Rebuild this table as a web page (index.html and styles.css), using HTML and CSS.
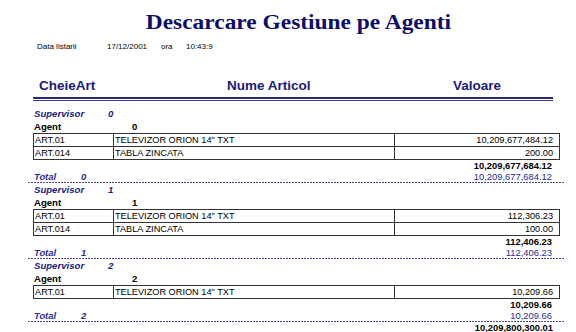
FILE: index.html
```html
<!DOCTYPE html>
<html>
<head>
<meta charset="utf-8">
<link rel="stylesheet" href="styles.css">
</head>
<body>
<div class="page">
  <h1 class="title"><span>Descarcare Gestiune pe Agenti</span></h1>
  <div class="meta"><span class="m-label">Data listarii</span><span class="m-date">17/12/2001</span><span class="m-ora">ora</span><span>10:43:9</span></div>
  <div class="head"><div class="h1">CheieArt</div><div class="h2">Nume Articol</div><div class="h3">Valoare</div></div>
  <div class="rule"></div>

  <section class="group">
    <div class="sup"><span class="k">Supervisor</span><span>0</span></div>
    <div class="agent"><span class="k">Agent</span><span>0</span></div>
    <table class="items">
      <colgroup><col class="c1"><col class="c2"><col class="c3"></colgroup>
      <tr><td>ART.01</td><td>TELEVIZOR ORION 14" TXT</td><td class="v">10,209,677,484.12</td></tr>
      <tr><td>ART.014</td><td>TABLA ZINCATA</td><td class="v">200.00</td></tr>
    </table>
    <div class="subtotal">10,209,677,684.12</div>
    <div class="total"><span class="k">Total</span><span class="n">0</span><span class="v">10,209,677,684.12</span></div>
    <div class="dash"></div>
  </section>

  <section class="group">
    <div class="sup"><span class="k">Supervisor</span><span>1</span></div>
    <div class="agent"><span class="k">Agent</span><span>1</span></div>
    <table class="items">
      <colgroup><col class="c1"><col class="c2"><col class="c3"></colgroup>
      <tr><td>ART.01</td><td>TELEVIZOR ORION 14" TXT</td><td class="v">112,306.23</td></tr>
      <tr><td>ART.014</td><td>TABLA ZINCATA</td><td class="v">100.00</td></tr>
    </table>
    <div class="subtotal">112,406.23</div>
    <div class="total"><span class="k">Total</span><span class="n">1</span><span class="v">112,406.23</span></div>
    <div class="dash"></div>
  </section>

  <section class="group">
    <div class="sup"><span class="k">Supervisor</span><span>2</span></div>
    <div class="agent"><span class="k">Agent</span><span>2</span></div>
    <table class="items">
      <colgroup><col class="c1"><col class="c2"><col class="c3"></colgroup>
      <tr><td>ART.01</td><td>TELEVIZOR ORION 14" TXT</td><td class="v">10,209.66</td></tr>
    </table>
    <div class="subtotal">10,209.66</div>
    <div class="total"><span class="k">Total</span><span class="n">2</span><span class="v">10,209.66</span></div>
    <div class="dash"></div>
  </section>

  <div class="grand">10,209,800,300.01</div>
</div>
</body>
</html>
```

FILE: styles.css
```css
html, body {
  margin: 0;
  background: #fff;
}
body {
  font-family: "Liberation Sans", Arial, sans-serif;
  color: #000;
  overflow: hidden;
}
.page {
  margin-left: 33px;
  width: 526px;
}
.title {
  margin: 10px 0 0;
  padding-left: 4px;
  font: bold 20px/24px "Liberation Serif", "Times New Roman", serif;
  color: #0d0d6b;
  text-align: center;
}
.title span {
  display: inline-block;
  transform: scaleX(1.17);
}
.meta {
  margin-top: 8px;
  display: flex;
  padding-left: 4px;
  font-size: 8px;
  line-height: 10px;
}
.m-label { width: 70px; }
.m-date { width: 54px; }
.m-ora { width: 25px; }
.head {
  margin-top: 26px;
  display: grid;
  grid-template-columns: 80px 281px 165px;
  font-weight: bold;
  font-size: 13.5px;
  line-height: 16px;
  color: #1a1a75;
}
.head .h1 { padding-left: 6px; }
.head .h2 { padding-left: 114px; }
.head .h3 { padding-left: 59px; }
.rule {
  margin-top: 3px;
  margin-bottom: 6px;
  width: 520px;
  height: 1px;
  border-top: 2px solid #2b2b7d;
  border-bottom: 1px solid #3a3a88;
}
.sup {
  display: flex;
  padding-left: 1px;
  font-style: italic;
  font-weight: bold;
  font-size: 9.6px;
  line-height: 13px;
  color: #1a1a80;
}
.sup .k { width: 74px; }
.agent {
  display: flex;
  padding-left: 1px;
  font-weight: bold;
  font-size: 9.6px;
  line-height: 13px;
}
.agent .k { width: 98px; }
.items {
  border-collapse: separate;
  border-spacing: 0;
  table-layout: fixed;
  width: 527px;
  border-top: 1px solid #333;
  border-left: 1px solid #333;
  font-size: 9.2px;
  line-height: 12px;
}
.c1 { width: 80px; }
.c2 { width: 281px; }
.c3 { width: 165px; }
.items td {
  padding: 0 0 0 1px;
  border-right: 1px solid #333;
  border-bottom: 1px solid #333;
  white-space: nowrap;
  overflow: hidden;
}
.items td.v {
  text-align: right;
  padding-right: 6px;
}
.subtotal {
  margin-top: 1px;
  text-align: right;
  padding-right: 7px;
  font-weight: bold;
  font-size: 9.4px;
  line-height: 10px;
}
.total {
  display: flex;
  padding-left: 1px;
  font-size: 9.4px;
  line-height: 11px;
  color: #2b2b8f;
}
.total .k, .total .n {
  font-style: italic;
  font-weight: bold;
}
.total .k { width: 47px; }
.total .v {
  margin-left: auto;
  padding-right: 7px;
}
.dash {
  height: 1px;
  margin-left: -5px;
  width: 537px;
  background: repeating-linear-gradient(90deg, #4b4b9b 0 2px, transparent 2px 3px);
}
.grand {
  margin-top: 1px;
  text-align: right;
  padding-right: 6px;
  font-weight: bold;
  font-size: 9.4px;
  line-height: 10px;
}
```
